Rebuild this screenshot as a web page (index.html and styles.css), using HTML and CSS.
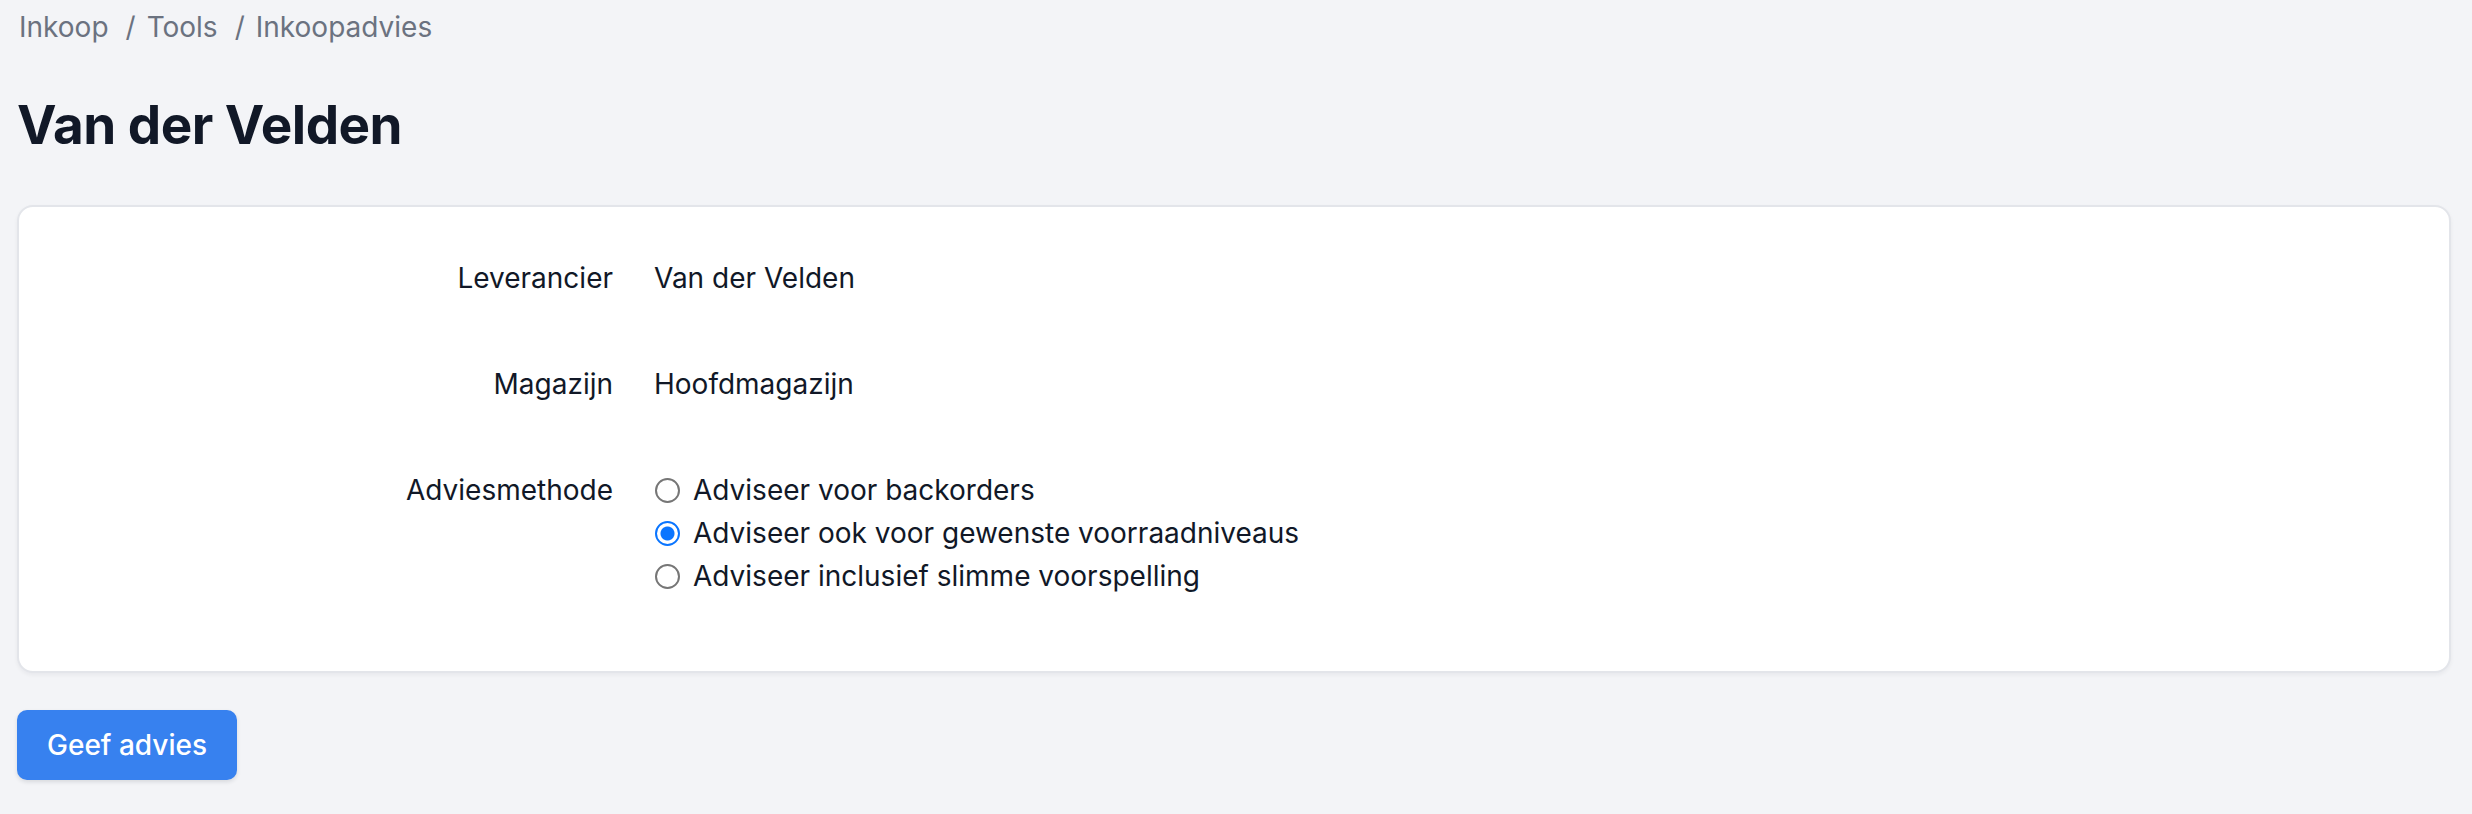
FILE: index.html
```html
<!DOCTYPE html>
<html lang="nl">
<head>
<meta charset="utf-8">
<title>Inkoopadvies</title>
<link rel="stylesheet" href="styles.css">
</head>
<body>
<div class="page">
  <nav class="breadcrumb">
    <a href="#" class="crumb">Inkoop</a>
    <span class="sep">/</span>
    <a href="#" class="crumb">Tools</a>
    <span class="sep">/</span>
    <span class="crumb">Inkoopadvies</span>
  </nav>
  <h1 class="title">Van der Velden</h1>
  <form class="card">
    <div class="row">
      <div class="label">Leverancier</div>
      <div class="value">Van der Velden</div>
    </div>
    <div class="row">
      <div class="label">Magazijn</div>
      <div class="value">Hoofdmagazijn</div>
    </div>
    <div class="row">
      <div class="label">Adviesmethode</div>
      <div class="options">
        <label class="option"><input type="radio" name="methode" class="radio"> Adviseer voor backorders</label>
        <label class="option"><input type="radio" name="methode" class="radio" checked> Adviseer ook voor gewenste voorraadniveaus</label>
        <label class="option"><input type="radio" name="methode" class="radio"> Adviseer inclusief slimme voorspelling</label>
      </div>
    </div>
  </form>
  <div class="actions">
    <button type="button" class="btn">Geef advies</button>
  </div>
</div>
</body>
</html>
```
FILE: styles.css
```css
* { box-sizing: border-box; }
html, body { margin: 0; padding: 0; }
body {
  background: #f3f4f7;
  font-family: Inter, "Noto Sans", sans-serif;
  color: #111827;
}
.page {
  padding: 8px 21px 30px 17px;
}
.breadcrumb {
  display: flex;
  align-items: center;
  font-size: 28px;
  line-height: 38px;
  color: #6b7280;
  padding-left: 2px;
}
.crumb { color: #6b7280; text-decoration: none; }
.sep { margin: 0 11px 0 17px; }
.title {
  margin: 44px 0 0 0;
  font-size: 53px;
  line-height: 70px;
  font-weight: 700;
  letter-spacing: -0.5px;
  color: #111827;
}
.card {
  margin-top: 45px;
  background: #fff;
  border: 2px solid #e3e5ea;
  border-radius: 16px;
  box-shadow: 0 2px 4px rgba(17, 24, 39, 0.05);
  padding: 50px 0 73px 0;
  display: flex;
  flex-direction: column;
  gap: 63px;
}
.row {
  display: grid;
  grid-template-columns: 594px 1fr;
  column-gap: 41px;
  font-size: 28px;
  line-height: 43px;
}
.label { text-align: right; color: #111827; }
.value { color: #111827; }
.options { display: flex; flex-direction: column; }
.option {
  display: flex;
  align-items: center;
  gap: 13px;
  color: #111827;
}
.radio {
  -webkit-appearance: none;
  appearance: none;
  flex: none;
  width: 25px;
  height: 25px;
  margin: 0 0 0 1px;
  border: 2px solid #767676;
  border-radius: 50%;
  background: #fff;
}
.radio:checked {
  border-color: #0a75ff;
  background: radial-gradient(circle, #0a75ff 0, #0a75ff 6.5px, #fff 7.5px);
}
.actions { margin-top: 37px; }
.btn {
  font-family: Inter, "Noto Sans", sans-serif;
  font-size: 28px;
  font-weight: 500;
  color: #fff;
  background: #3781ef;
  border: none;
  border-radius: 10px;
  height: 70px;
  padding: 0 30px;
  box-shadow: 0 2px 4px rgba(17, 24, 39, 0.12);
  cursor: pointer;
}
```
